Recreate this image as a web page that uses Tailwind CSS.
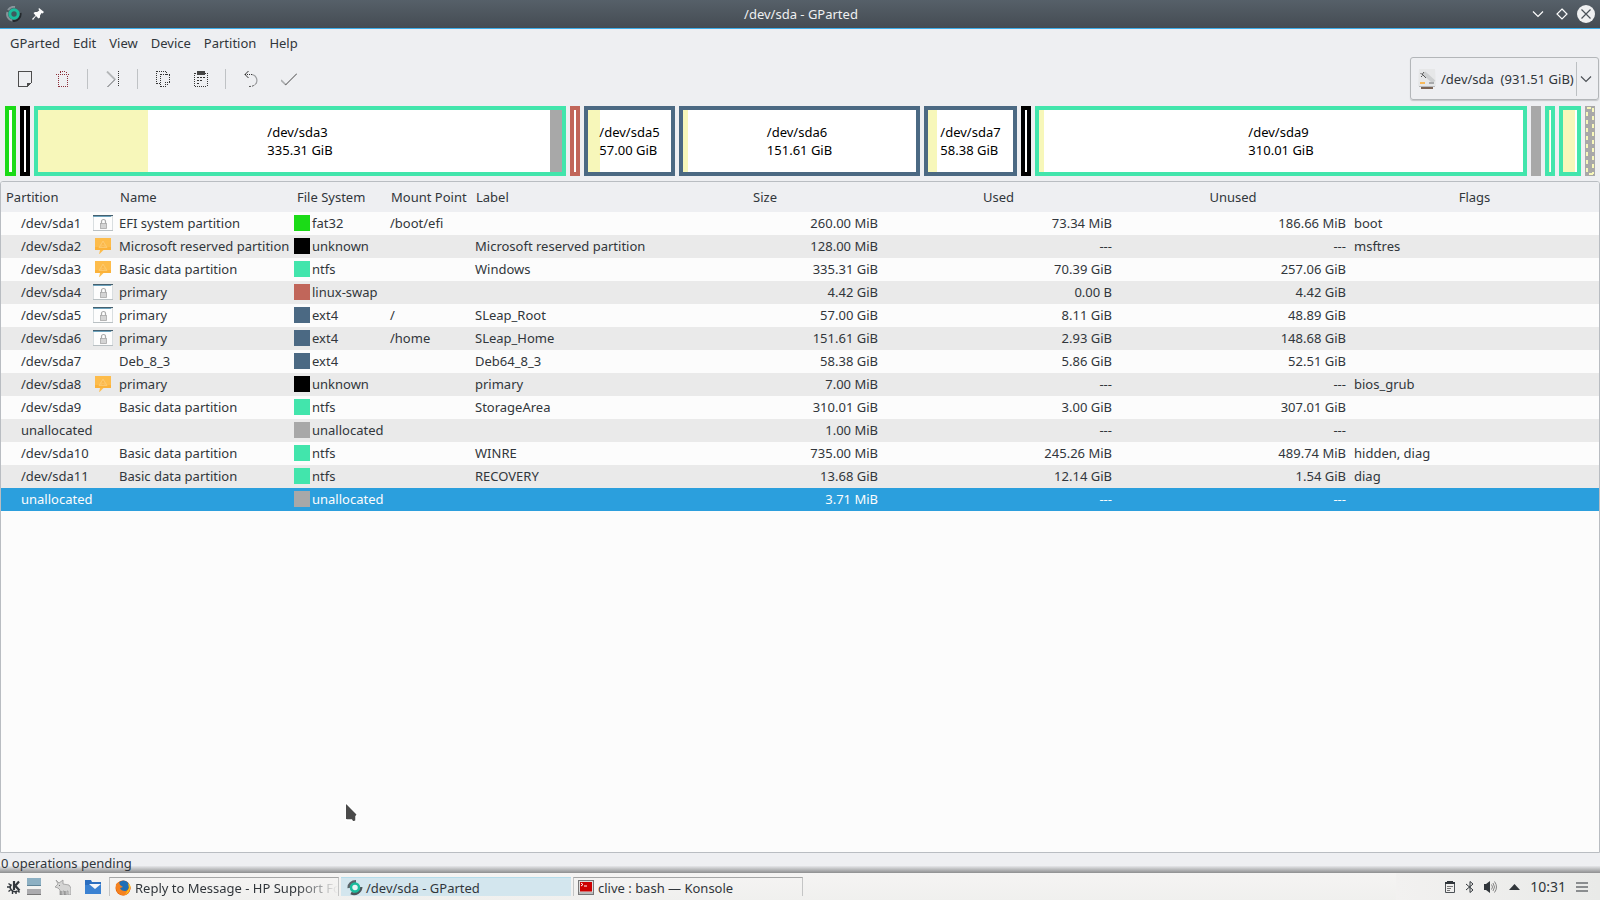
<!DOCTYPE html>
<html lang="en">
<head>
<meta charset="utf-8">
<title>/dev/sda - GParted</title>
<script src="https://cdn.jsdelivr.net/npm/@tailwindcss/browser@4"></script>
</head>
<body class="flex h-screen flex-col overflow-hidden bg-[#eeeff2] font-['Noto_Sans',sans-serif] text-[13px] leading-[18px] text-[#31363b]">

<svg class="hidden">
  <symbol id="lock" viewBox="0 0 20 16">
    <rect x="0" y="0" width="20" height="16" fill="#d9dee0"/><rect x="1" y="2" width="18" height="13" fill="#fdfdfd"/>
    <rect width="20" height="1" fill="#45606f"/><rect y="1" width="18" height="1" fill="#6da3bd"/><rect y="15" width="20" height="1" fill="#b9c0c3"/>
    <path d="M8.500 9V6.500a2 2 0 0 1 4 0V9" fill="none" stroke="#aaa" stroke-width="1.200"/><rect x="7.500" y="8.500" width="6" height="5" fill="#d4d4d4" stroke="#a8a8a8" stroke-width=".8"/>
  </symbol>
  <symbol id="warn" viewBox="0 0 16 16">
    <path d="M0 0h16v12H8.500L4 16.500 5 12H0z" fill="#fdbc4b"/><path d="M0 9h16v3H0z" fill="#fbb23a"/>
    <path d="M8 3 12 9.500H4z" fill="#fcc05a" stroke="#fdcb75" stroke-width=".8"/><path d="M8 5v2M8 8v1" stroke="#f8b040"/>
  </symbol>
</svg>

<header class="flex h-[29px] shrink-0 items-center border-b border-[#3daee9] bg-linear-to-b from-[#566069] to-[#454c53] pr-[5px] pl-[6px] text-[#eff0f1]">
  <svg class="h-4 w-4" viewBox="0 0 16 16"><path d="M2 4A7 7 0 0 1 9 1" fill="none" stroke="#8b959b" stroke-width="2"/><path d="M1.500 6A6.500 6.500 0 0 0 6 14.500" fill="none" stroke="#899298" stroke-width="2"/><path d="M14.500 7A7 7 0 0 1 7 15" fill="none" stroke="#24292d" stroke-width="2"/><circle cx="8" cy="8" r="4.200" fill="#3e5a5e" stroke="#1abc9c" stroke-width="3"/></svg>
  <svg class="ml-[10px] h-3 w-3" viewBox="0 0 12 12"><path d="M7 0 12 4 10.500 5.500 9.500 5 8 7.500 8 9.500 6.500 10.500 4 8 1 12 0 11 3.500 7.500 1.500 5 3 4 5 4 7.300 2.500 6.500 1z" fill="#fcfcfc"/></svg>
  <h1 class="flex-1 pl-[26px] text-center">/dev/sda - GParted</h1>
  <button class="mr-3" aria-label="Minimize"><svg class="h-3 w-3" viewBox="0 0 12 12" fill="none" stroke="#fcfcfc" stroke-width="1.200"><path d="M1 3.500 6 8.500 11 3.500"/></svg></button>
  <button class="mr-[9px]" aria-label="Maximize"><svg class="h-3 w-3" viewBox="0 0 12 12" fill="none" stroke="#fcfcfc" stroke-width="1.200"><path d="M6 1 11 6 6 11 1 6z"/></svg></button>
  <button aria-label="Close"><svg class="h-[18px] w-[18px]" viewBox="0 0 18 18"><circle cx="9" cy="9" r="9" fill="#eff0f1"/><path d="M4.500 4.500l9 9M13.500 4.500l-9 9" stroke="#4a5158" stroke-width="1.200"/></svg></button>
</header>

<nav class="flex h-7 shrink-0 items-center gap-[13px] px-[10px]">
  <button>GParted</button><button>Edit</button><button>View</button><button>Device</button><button>Partition</button><button>Help</button>
</nav>

<div class="flex h-[43px] shrink-0 items-center" role="toolbar">
  <div class="flex flex-1 items-center">
    <button class="ml-[17px]" aria-label="New"><svg class="h-4 w-4" viewBox="0 0 16 16" shape-rendering="crispEdges"><path d="M1.500.5h13v11l-4 4h-9z" fill="none" stroke="#4d4d4d"/><path d="M10 16v-4.500h5L10 16z" fill="#4d4d4d"/></svg></button>
    <button class="ml-[23px]" aria-label="Delete"><svg class="h-4 w-4" viewBox="0 0 16 16" fill="none" stroke="#8c2f3a" stroke-dasharray="1 1" shape-rendering="crispEdges"><path d="M0 3.500h14M4 .5h6M4.500 1v3M10.500 1v3M2.500 5v11M11.500 5v11M3 15.500h9"/></svg></button>
    <span class="ml-[15px] h-5 w-px bg-[#bfc2c5]"></span>
    <button class="ml-[17px]" aria-label="Resize/Move"><svg class="h-4 w-4" viewBox="0 0 16 16" fill="none"><path d="M2 .5 10 8.500" stroke="#b4b6b8" stroke-width="1.800"/><path d="M10 8.500 2.500 16" stroke="#5a5d60"/><path d="M13.500 0v16" stroke="#333" stroke-dasharray="1 1" shape-rendering="crispEdges"/></svg></button>
    <span class="ml-4 h-5 w-px bg-[#bfc2c5]"></span>
    <button class="ml-[17px]" aria-label="Copy"><svg class="h-4 w-4" viewBox="0 0 16 16" fill="none" stroke="#333" stroke-dasharray="1 1" shape-rendering="crispEdges"><path d="M1.500 0v13M2 .5h10M11.500 1v3M2 12.500h3M5.500 3v13M6 3.500h9M14.500 4v8M6 15.500h6M10 11.500h5M10.500 11v4M12 13.500h2"/></svg></button>
    <button class="ml-[22px]" aria-label="Paste"><svg class="h-4 w-4" viewBox="0 0 16 16" fill="none" stroke="#333" stroke-dasharray="1 1" shape-rendering="crispEdges"><path d="M1.500 2v14M14.500 2v14M2 15.500h12M2 2.500h2M12 2.500h2"/><path d="M4 .5h8M4 1.500h8M4 2.500h8M4 3.500h8" stroke="#444" stroke-dasharray="none"/><path d="M4 6.500h8M4 9.500h6M4 12.500h3" stroke-dasharray="2 1"/></svg></button>
    <span class="ml-4 h-5 w-px bg-[#bfc2c5]"></span>
    <button class="ml-[17px]" aria-label="Undo"><svg class="h-4 w-4" viewBox="0 0 16 16" fill="none"><path d="M2 3.500h7" stroke="#333" stroke-dasharray="1 1" shape-rendering="crispEdges"/><path d="M5.500 0 2 3.500 5.500 7" stroke="#333"/><path d="M9 3.500a6 6 0 0 1 4 9" stroke="#9b9da0" stroke-width="1.200"/><path d="M13 12.500q-2 3-7 3" stroke="#555" stroke-dasharray="2 1"/></svg></button>
    <button class="ml-[22px]" aria-label="Apply"><svg class="h-4 w-4" viewBox="0 0 16 16" fill="none"><path d="M0 9 5 14" stroke="#aaacae" stroke-width="1.600"/><path d="M4.500 14 16 2.500" stroke="#444"/></svg></button>
  </div>
  <button class="mr-px flex h-[43px] w-[189px] items-center rounded-[3px] border border-[#b3b6b9] pl-[7px] shadow-[0_1px_1px_#c5c7ca]">
    <svg class="h-5 w-[18px] shrink-0" viewBox="0 0 18 20"><path d="M1 0h16l1 17H0z" fill="#e6e7e8"/><path d="M1 17h16v1H1z" fill="#b8babc"/><path d="M3 18h12v2H3z" fill="#7b6455"/><path d="M6 4 16 13" stroke="#cdcfd0" stroke-width="4"/><path d="M2.500 4l1.500 1.500M6 3 4.500 5M3 8l1.500-1.500M4 5l4 4" stroke="#555"/><path d="M2 13h5v2H2z" fill="#f8b95a"/><path d="M11 13h5v2h-5z" fill="#a7a9ab"/></svg>
    <span class="flex-1 pl-[5px] text-left whitespace-pre">/dev/sda  (931.51 GiB)</span>
    <span class="h-[34px] w-px bg-[#bcc0c3]"></span>
    <svg class="mr-[6px] ml-[3px] h-3 w-3 shrink-0" viewBox="0 0 12 12" fill="none" stroke="#4d5257" stroke-width="1.200"><path d="M1 3.500 6 8.500 11 3.500"/></svg>
  </button>
</div>

<section id="disk" class="mt-[6px] mb-[5px] grid h-[70px] shrink-0 grid-cols-[11fr_10fr_532fr_10fr_91fr_241fr_93fr_10fr_492fr_10fr_10fr_22fr_10fr] gap-1 px-[5px] text-black" aria-label="Disk map"></section>

<main class="flex-1 overflow-hidden rounded-t-[3px] border border-[#b9bdc2] bg-[#fcfcfc]">
  <table class="w-full table-fixed border-collapse text-left whitespace-nowrap">
    <colgroup><col class="w-[115px]"><col class="w-[175px]"><col class="w-[95px]"><col class="w-[85px]"><col class="w-[178px]"><col class="w-[232px]"><col class="w-[235px]"><col class="w-[234px]"><col></colgroup>
    <thead><tr class="h-[30px] bg-[#eeeff2]">
      <th class="pl-[5px] font-normal">Partition</th><th class="pl-1 font-normal">Name</th><th class="pl-[6px] font-normal">File System</th><th class="pl-[5px] font-normal">Mount Point</th><th class="pl-[5px] font-normal">Label</th><th class="text-center font-normal">Size</th><th class="text-center font-normal">Used</th><th class="text-center font-normal">Unused</th><th class="text-center font-normal">Flags</th>
    </tr></thead>
    <tbody id="rows"></tbody>
  </table>
</main>

<footer class="h-[13px] shrink-0 pl-px"><p class="relative z-10 leading-[20px]">0 operations pending</p></footer>
<div class="h-[7px] shrink-0 bg-linear-to-b from-[#e6e7ea] to-[#8e8f90]"></div>

<div class="flex h-[27px] shrink-0 items-center overflow-hidden bg-linear-to-b from-[#f5f4f3] to-[#f0f0ee]">
  <button class="ml-[6px]" aria-label="Application launcher"><svg class="h-4 w-4" viewBox="0 0 16 16" fill="none" stroke="#31363b"><path d="M8 2v9M9.500 6.500 13 2.500M9 6.500 13.500 11.500" stroke-width="2.200"/><path d="M5.500 5.500A3.500 3.500 0 0 0 5 10.500Q8 14 11.500 12" stroke-width="1.600"/><path d="M1 8h3M2.500 4.500l2 1.500M2.500 12.500l2-1.500M6.500 12v3M10 12.500v2.500M12 11.500l1.500 2" stroke-width="1.400"/></svg></button>
  <button class="ml-[5px] flex w-[14px] flex-col gap-[3px]" aria-label="Virtual desktops"><span class="h-2 border-b border-[#5f8498] bg-[#8db0c3]"></span><span class="h-[6px] border-b border-[#777] bg-[#ababae]"></span></button>
  <button class="ml-[14px]" aria-label="Desktop search"><svg class="h-4 w-4" viewBox="0 0 16 16"><path d="M1 1l3 3 4-3v4l6 1 2 3v7h-3v-4h-1v4H9v-4H8v4H5v-5L3 9 0 8l3-3z" fill="#d5d5d4" stroke="#9b9b9a" stroke-width=".8"/><path d="M6 16v-4M10 16v-4M4 6l1 1" stroke="#777"/></svg></button>
  <button class="ml-[14px]" aria-label="File manager"><svg class="h-4 w-4" viewBox="0 0 16 16"><path d="M0 1h6l1 2h9v12H0z" fill="#2c6fc0"/><path d="M0 6h16v9H0z" fill="#3b82d2"/><path d="M4 5h12l-6 5z" fill="#f5f7fa"/></svg></button>
  <button class="ml-2 flex h-[19px] w-[230px] border-x border-t border-[#a5a6a6] border-x-[#c4c5c5] pl-[5px]">
    <svg class="mt-[2px] h-4 w-4 shrink-0" viewBox="0 0 16 16"><circle cx="8" cy="8" r="7.500" fill="#e66000"/><circle cx="8.500" cy="6" r="5.500" fill="#1f6fb5"/><path d="M1 4Q0 12 6 15 13 17 15.500 9L15.500 6Q14 11 10 11 6 11 5 8L8 7 5 5 4 2z" fill="#f58220"/><path d="M15.500 6Q15 12 10 15L14 8 13 3z" fill="#fcc21b"/></svg>
    <span class="flex-1 overflow-hidden mask-r-from-80% pl-1 text-left leading-[21px] whitespace-nowrap">Reply to Message - HP Support Fo</span>
  </button>
  <button class="ml-[2px] flex h-[19px] w-[230px] border-t border-[#b5dcea] bg-[#d3e6ee] pl-[6px]">
    <svg class="mt-[2px] h-4 w-4 shrink-0" viewBox="0 0 16 16"><path d="M9 1.500A7 6 0 0 0 2 8" fill="none" stroke="#5b6469" stroke-width="3"/><path d="M14 7A7 7 0 0 1 4 13" fill="none" stroke="#4d5559" stroke-width="3"/><circle cx="8" cy="7.500" r="4" fill="#e8f4f4" stroke="#1abc9c" stroke-width="2.500"/></svg>
    <span class="pl-[3px] leading-[21px]">/dev/sda - GParted</span>
  </button>
  <button class="ml-[2px] flex h-[19px] w-[230px] border-x border-t border-[#a5a6a6] border-x-[#c4c5c5] pl-1">
    <svg class="mt-[2px] h-4 w-4 shrink-0" viewBox="0 0 16 16"><rect x=".5" y=".5" width="15" height="14" fill="#ddd" stroke="#777"/><rect x="2" y="2" width="12" height="9.500" fill="#c00"/><path d="M3 3l2 1.500L3 6M6 6h3" fill="none" stroke="#fff"/><path d="M1 13h14" stroke="#999"/></svg>
    <span class="pl-1 leading-[21px]">clive : bash — Konsole</span>
  </button>
  <div class="ml-auto flex h-full items-center bg-linear-to-r from-[#f2f1f0] to-[#e9eae8] pr-3 pl-12">
    <button aria-label="Clipboard"><svg class="h-3 w-3" viewBox="0 0 12 12"><path d="M1.500 1.500h9v10h-9z" fill="none" stroke="#4d5257"/><path d="M3 0h6v3H3zM1 1h10v2H1z" fill="#31363b"/><path d="M3 5.500h6M3 7.500h4M3 9.500h3" stroke="#777"/></svg></button>
    <button class="ml-2" aria-label="Bluetooth"><svg class="h-3 w-3" viewBox="0 0 12 12" fill="none" stroke="#31363b"><path d="M2 3 9 9 6 11.500V.5L9 3 2 9"/></svg></button>
    <button class="ml-[7px]" aria-label="Volume"><svg class="h-[14px] w-[14px]" viewBox="0 0 14 14"><path d="M1 4h2l4-3v12L3 10H1z" fill="#31363b"/><path d="M8.500 4.500q2 2.500 0 5M10 3q3 4 0 8M11.500 1.500q4 5.500 0 11" fill="none" stroke="#777" stroke-width=".9"/></svg></button>
    <button class="ml-3" aria-label="Show hidden icons"><svg class="h-[6px] w-[11px]" viewBox="0 0 11 6"><path d="M5.500 0 11 6H0z" fill="#31363b"/></svg></button>
    <time class="ml-[10px] text-[14px]">10:31</time>
    <button class="ml-[10px] flex w-3 flex-col gap-[2px]" aria-label="Panel settings"><span class="h-[2px] bg-[#8a8d8f]"></span><span class="h-[2px] bg-[#8a8d8f]"></span><span class="h-[2px] bg-[#8a8d8f]"></span></button>
  </div>
</div>

<svg class="absolute top-[801px] left-[344px] h-[24px] w-[16px]" viewBox="0 0 16 24"><path d="M2 2v17h6l1 2 3-1v-5l1-1z" fill="#4a4a4a" stroke="#fff" stroke-width="1.500"/><path d="M2 3v15h6l1 2 2-1v-4l1.500-1.500z" fill="#4a4a4a"/></svg>

<script>
const C = {
  fat32: ['border-[#1bdb17]', 'bg-[#1bdb17]'], unknown: ['border-black', 'bg-black'], ntfs: ['border-[#42e5ac]', 'bg-[#42e5ac]'],
  'linux-swap': ['border-[#c1665a]', 'bg-[#c1665a]'], ext4: ['border-[#4b6983]', 'bg-[#4b6983]'], unallocated: ['border-[#a8a8a8]', 'bg-[#a8a8a8]']
};
// width share, file system, used share, unallocated share, name, size
const map = [
  [11,'fat32',0,0],[10,'unknown',0,0],[532,'ntfs',110,12,'/dev/sda3','335.31 GiB'],[10,'linux-swap',0,0],
  [91,'ext4',12,0,'/dev/sda5','57.00 GiB'],[241,'ext4',5,0,'/dev/sda6','151.61 GiB'],[93,'ext4',9,0,'/dev/sda7','58.38 GiB'],
  [10,'unknown',0,0],[492,'ntfs',5,0,'/dev/sda9','310.01 GiB'],[10,'unallocated',2,2],[10,'ntfs',1,0],[22,'ntfs',12,0]
];
document.getElementById('disk').innerHTML = map.map(([w, fs, used, un, name, size]) => {
  const inner = w - 8;
  const bg = fs === 'unallocated' ? '#a8a8a8' :
    `linear-gradient(to right,#f7f7ba ${used / inner * 100}%,#fff 0 ${(inner - un) / inner * 100}%,#a8a8a8 0)`;
  return `<div class="flex min-w-0 items-center justify-center border-4 ${C[fs][0]}" style="background:${bg} padding-box">${name ? `<p class="whitespace-nowrap leading-[18px]">${name}<br>${size}</p>` : ''}</div>`;
}).join('') + `<div class="h-[70px] min-w-0 bg-[#a8a8a8]"><svg class="h-full w-full" viewBox="0 0 10 70" preserveAspectRatio="none" fill="none" stroke="#f7f7ba" stroke-width="2" shape-rendering="crispEdges"><path d="M2 6v60M8 2v66" stroke-dasharray="4 4"/><path d="M2 2h4M4 68h4"/></svg></div>`;

const L = 'lock', W = 'warn', u = 'unallocated', B = 'Basic data partition';
const rows = [
  ['/dev/sda1',L,'EFI system partition','fat32','/boot/efi','','260.00 MiB','73.34 MiB','186.66 MiB','boot'],
  ['/dev/sda2',W,'Microsoft reserved partition','unknown','','Microsoft reserved partition','128.00 MiB','---','---','msftres'],
  ['/dev/sda3',W,B,'ntfs','','Windows','335.31 GiB','70.39 GiB','257.06 GiB',''],
  ['/dev/sda4',L,'primary','linux-swap','','','4.42 GiB','0.00 B','4.42 GiB',''],
  ['/dev/sda5',L,'primary','ext4','/','SLeap_Root','57.00 GiB','8.11 GiB','48.89 GiB',''],
  ['/dev/sda6',L,'primary','ext4','/home','SLeap_Home','151.61 GiB','2.93 GiB','148.68 GiB',''],
  ['/dev/sda7','','Deb_8_3','ext4','','Deb64_8_3','58.38 GiB','5.86 GiB','52.51 GiB',''],
  ['/dev/sda8',W,'primary','unknown','','primary','7.00 MiB','---','---','bios_grub'],
  ['/dev/sda9','',B,'ntfs','','StorageArea','310.01 GiB','3.00 GiB','307.01 GiB',''],
  [u,'','',u,'','','1.00 MiB','---','---',''],
  ['/dev/sda10','',B,'ntfs','','WINRE','735.00 MiB','245.26 MiB','489.74 MiB','hidden, diag'],
  ['/dev/sda11','',B,'ntfs','','RECOVERY','13.68 GiB','12.14 GiB','1.54 GiB','diag'],
  [u,'','',u,'','','3.71 MiB','---','---','']
];
document.getElementById('rows').innerHTML = rows.map((r, i) => `
<tr class="h-[23px] ${i === 12 ? 'bg-[#2b9fdd] text-[#fcfcfc]' : i % 2 ? 'bg-[#eaeaea]' : 'bg-[#fcfcfc]'}">
<td class="pb-px pl-5"><div class="flex items-center justify-between">${r[0]}${r[1] === L ? '<svg class="mr-[3px] h-4 w-5"><use href="#lock"/></svg>' : r[1] === W ? '<svg class="mr-[5px] h-4 w-4"><use href="#warn"/></svg>' : ''}</div></td>
<td class="pb-px pl-[3px]">${r[2]}</td>
<td class="pb-px pl-[3px]"><div class="flex items-center gap-[2px]"><span class="h-4 w-4 shrink-0 ${C[r[3]][1]}"></span>${r[3]}</div></td>
<td class="pb-px pl-1">${r[4]}</td><td class="pb-px pl-1">${r[5]}</td>
<td class="pr-[3px] pb-px text-right">${r[6]}</td><td class="pr-1 pb-px text-right">${r[7]}</td><td class="pr-1 pb-px text-right">${r[8]}</td><td class="pb-px pl-1">${r[9]}</td></tr>`).join('');
</script>
</body>
</html>
